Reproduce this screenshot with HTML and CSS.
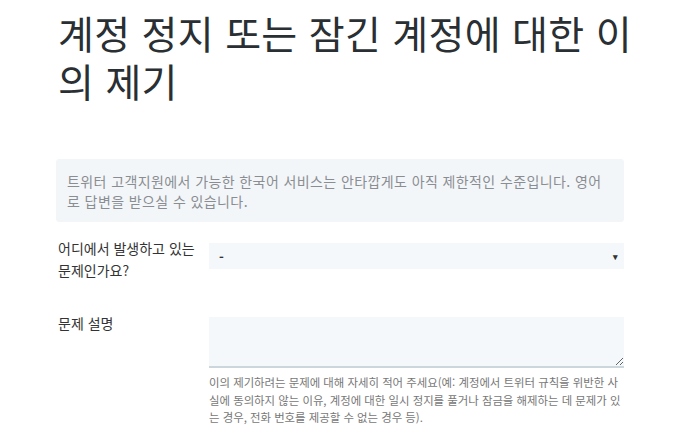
FILE: index.html
```html
<!DOCTYPE html>
<html lang="ko">
<head>
    <meta charset="UTF-8">
    <meta name="viewport" content="width=device-width, initial-scale=1.0">
    <title>계정 정지 또는 잠긴 계정에 대한 이의 제기</title>
    <link rel="stylesheet" href="styles.css">
</head>
<body>

    <div class="container">
        <h1>계정 정지 또는 잠긴 계정에 대한 이의 제기</h1>

        <div class="notice">
            트위터 고객지원에서 가능한 한국어 서비스는 안타깝게도 아직 제한적인 수준입니다. 영어로 답변을 받으실 수 있습니다.
        </div>

        <div class="field">
            <label for="issueWhere">어디에서 발생하고 있는 문제인가요?</label>
            <div class="control">
                <div class="select" id="issueWhere">
                    <span>-</span>
                    <span class="arrow">&#9662;</span>
                </div>
            </div>
        </div>

        <div class="field field-desc">
            <label for="issueDesc">문제 설명</label>
            <div class="control">
                <textarea id="issueDesc"></textarea>
                <p class="hint">이의 제기하려는 문제에 대해 자세히 적어 주세요(예: 계정에서 트위터 규칙을 위반한 사실에 동의하지 않는 이유, 계정에 대한 일시 정지를 풀거나 잠금을 해제하는 데 문제가 있는 경우, 전화 번호를 제공할 수 없는 경우 등).</p>
            </div>
        </div>
    </div>

</body>
</html>
```

FILE: styles.css
```css
body {
    font-family: "Noto Sans CJK KR", "Noto Sans", sans-serif;
    margin: 0;
    background: #fff;
    color: #333;
    word-break: break-all;
}
.container {
    width: 568px;
    padding: 8px 0 0 56px;
}
h1 {
    font-size: 39px;
    font-weight: 400;
    line-height: 48px;
    letter-spacing: 0.3px;
    margin: 0 -30px 0 2px;
    color: #292f33;
}
.notice {
    margin-top: 55px;
    background: #f3f6f9;
    border-radius: 3px;
    padding: 12px 14px 11px 11px;
    font-size: 14px;
    line-height: 20px;
    letter-spacing: 0.4px;
    color: #8a8d91;
}
.field {
    display: flex;
    margin-top: 15px;
}
.field label {
    width: 151px;
    flex-shrink: 0;
    padding-left: 2px;
    font-size: 14px;
    line-height: 22px;
    color: #333;
    word-break: keep-all;
}
.control {
    flex: 1;
}
.select {
    display: flex;
    justify-content: space-between;
    align-items: center;
    height: 26px;
    margin-top: 6px;
    padding: 0 6px 0 10px;
    background: #f5f8fa;
    font-size: 13px;
    font-weight: 700;
    color: #333;
}
.arrow {
    font-size: 9px;
}
.field-desc {
    margin-top: 31px;
}
textarea {
    display: block;
    box-sizing: border-box;
    width: 100%;
    height: 51px;
    margin: 5px 0 0;
    border: none;
    border-bottom: 2px solid #ccd6dd;
    background: #f5f8fa;
    resize: vertical;
}
.hint {
    margin: 6px 0 0;
    font-size: 11.4px;
    line-height: 17.5px;
    color: #777;
}
```
